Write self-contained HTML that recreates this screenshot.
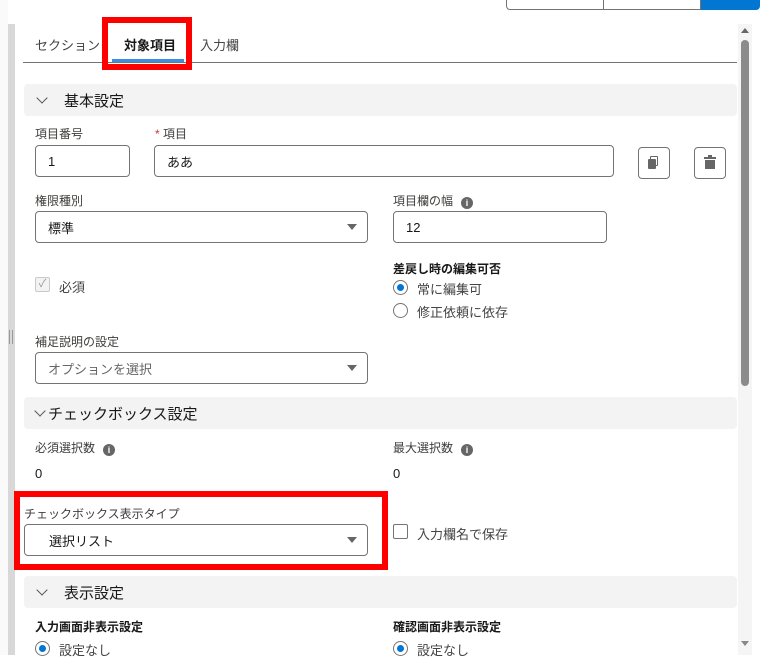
<!DOCTYPE html><html><head><meta charset="utf-8"><style>
*{box-sizing:border-box;margin:0;padding:0}
body{width:768px;height:655px;overflow:hidden;background:#fff;font-family:"Liberation Sans","Noto Sans CJK JP",sans-serif;color:#181818;position:relative}
.a{position:absolute}
.lbl{position:absolute;font-size:12px;color:#3e3e3c;line-height:14px}
.b{font-weight:bold;color:#181818}
.inp{position:absolute;border:1px solid #747474;border-radius:4px;background:#fff;font-size:13px;padding-left:12px;display:flex;align-items:center}
.tri{position:absolute;right:10px;top:50%;margin-top:-3px;width:0;height:0;border-left:5px solid transparent;border-right:5px solid transparent;border-top:6px solid #666}
.sec{position:absolute;left:24px;width:713px;height:32px;background:#f3f3f3;border-radius:4px;font-size:15px;display:flex;align-items:center}
.chev{display:inline-block;width:8px;height:8px;border-right:1.5px solid #555;border-bottom:1.5px solid #555;transform:rotate(45deg);margin-top:-5px}
.info{display:inline-block;width:12px;height:12px;border-radius:50%;background:#666;color:#fff;font-size:9px;text-align:center;line-height:12px;font-weight:bold;vertical-align:-1px;margin-left:8px}
.rad{position:absolute;width:15px;height:15px;border-radius:50%;border:1px solid #747474;background:#fff}
.rad.on::after{content:"";position:absolute;left:3px;top:3px;width:7px;height:7px;border-radius:50%;background:#0176d3}
.ibtn{position:absolute;width:32px;height:32px;border:1px solid #747474;border-radius:4px;background:#fff}
.red{position:absolute;border:6px solid #f00}
</style></head><body>
<div class="a" style="left:0;top:0;width:8px;height:655px;background:#fafafa"></div>
<div class="a" style="left:8px;top:24px;width:7px;height:631px;background:#d8d8d8"></div>
<div class="a" style="left:9px;top:330px;width:4px;height:14px;border-left:1px solid #999;border-right:1px solid #999"></div>
<div class="a" style="left:506px;top:-10px;width:98px;height:20px;border:1px solid #747474;border-radius:4px 0 0 4px"></div>
<div class="a" style="left:603px;top:-10px;width:98px;height:20px;border:1px solid #747474"></div>
<div class="a" style="left:701px;top:-10px;width:59px;height:20px;background:#0176d3;border-radius:0 4px 4px 0"></div>
<!-- tabs -->
<div class="a" style="left:35px;top:35px;font-size:13px;color:#444">セクション</div>
<div class="a" style="left:124px;top:35px;font-size:13px;font-weight:bold">対象項目</div>
<div class="a" style="left:200px;top:35px;font-size:13px;color:#444">入力欄</div>
<div class="a" style="left:112px;top:59px;width:72px;height:3px;background:#3b8de6"></div>
<div class="a" style="left:23px;top:62px;width:714px;height:1px;background:#747474"></div>
<div class="red" style="left:102px;top:17px;width:90px;height:53px"></div>
<!-- scrollbar -->
<div class="a" style="left:738px;top:24px;width:14px;height:631px;background:#f5f5f5"></div>
<div class="a" style="left:741px;top:40px;width:8px;height:346px;background:#8b8b8b;border-radius:4px"></div>
<div class="a" style="left:741px;top:28px;border-left:4px solid transparent;border-right:4px solid transparent;border-bottom:5px solid #666"></div>
<div class="a" style="left:741px;top:641px;border-left:4px solid transparent;border-right:4px solid transparent;border-top:5px solid #888"></div>
<!-- sec1 -->
<div class="sec" style="top:84px"><span class="chev" style="margin-left:14px"></span><span style="margin-left:18px">基本設定</span></div>
<div class="lbl" style="left:35px;top:127px">項目番号</div>
<div class="inp" style="left:35px;top:145px;width:95px;height:32px">1</div>
<div class="lbl" style="left:155px;top:127px"><span style="color:#c23934">*</span> 項目</div>
<div class="inp" style="left:154px;top:145px;width:460px;height:32px">ああ</div>
<div class="ibtn" style="left:638px;top:147px"><div class="a" style="left:11px;top:8px;width:8px;height:10px;border:1.5px solid #666;border-radius:1px"></div><div class="a" style="left:9px;top:11px;width:8px;height:10px;background:#666;border-radius:1px"></div></div>
<div class="ibtn" style="left:694px;top:147px"><div class="a" style="left:9px;top:9px;width:12px;height:2px;background:#666"></div><div class="a" style="left:13px;top:7px;width:4px;height:2px;background:#666"></div><div class="a" style="left:10px;top:12px;width:10px;height:9px;background:#666"></div></div>
<div class="lbl" style="left:35px;top:194px">権限種別</div>
<div class="inp" style="left:35px;top:211px;width:333px;height:32px">標準<span class="tri"></span></div>
<div class="lbl" style="left:393px;top:194px">項目欄の幅<span class="info">i</span></div>
<div class="inp" style="left:393px;top:211px;width:214px;height:32px">12</div>
<div class="a" style="left:35px;top:277px;width:15px;height:15px;border:1px solid #c9c9c9;border-radius:2px;background:#f3f3f3;color:#999;font-size:11px;text-align:center;line-height:13px">✓</div>
<div class="a" style="left:59px;top:277px;font-size:13px;color:#444">必須</div>
<div class="lbl b" style="left:393px;top:262px">差戻し時の編集可否</div>
<div class="rad on" style="left:393px;top:280px"></div><div class="a" style="left:417px;top:279px;font-size:13px;color:#444">常に編集可</div>
<div class="rad" style="left:393px;top:303px"></div><div class="a" style="left:417px;top:302px;font-size:13px;color:#444">修正依頼に依存</div>
<div class="lbl" style="left:35px;top:335px">補足説明の設定</div>
<div class="inp" style="left:35px;top:352px;width:333px;height:32px;color:#666">オプションを選択<span class="tri"></span></div>
<!-- sec2 -->
<div class="sec" style="top:397px"><span class="chev" style="margin-left:12px"></span><span style="margin-left:4px">チェックボックス設定</span></div>
<div class="lbl" style="left:35px;top:441px">必須選択数<span class="info">i</span></div>
<div class="lbl" style="left:393px;top:441px">最大選択数<span class="info">i</span></div>
<div class="a" style="left:35px;top:466px;font-size:13px">0</div>
<div class="a" style="left:393px;top:466px;font-size:13px">0</div>
<div class="red" style="left:14px;top:491px;width:374px;height:79px"></div>
<div class="lbl" style="left:24px;top:507px">チェックボックス表示タイプ</div>
<div class="inp" style="left:24px;top:524px;width:344px;height:32px;padding-left:24px">選択リスト<span class="tri"></span></div>
<div class="a" style="left:393px;top:524px;width:15px;height:15px;border:1px solid #747474;border-radius:2px"></div>
<div class="a" style="left:417px;top:524px;font-size:13px;color:#444">入力欄名で保存</div>
<!-- sec3 -->
<div class="sec" style="top:576px"><span class="chev" style="margin-left:14px"></span><span style="margin-left:18px">表示設定</span></div>
<div class="lbl b" style="left:35px;top:620px">入力画面非表示設定</div>
<div class="lbl b" style="left:393px;top:620px">確認画面非表示設定</div>
<div class="rad on" style="left:35px;top:641px"></div><div class="a" style="left:59px;top:640px;font-size:13px;color:#444">設定なし</div>
<div class="rad on" style="left:393px;top:641px"></div><div class="a" style="left:417px;top:640px;font-size:13px;color:#444">設定なし</div>
</body></html>
